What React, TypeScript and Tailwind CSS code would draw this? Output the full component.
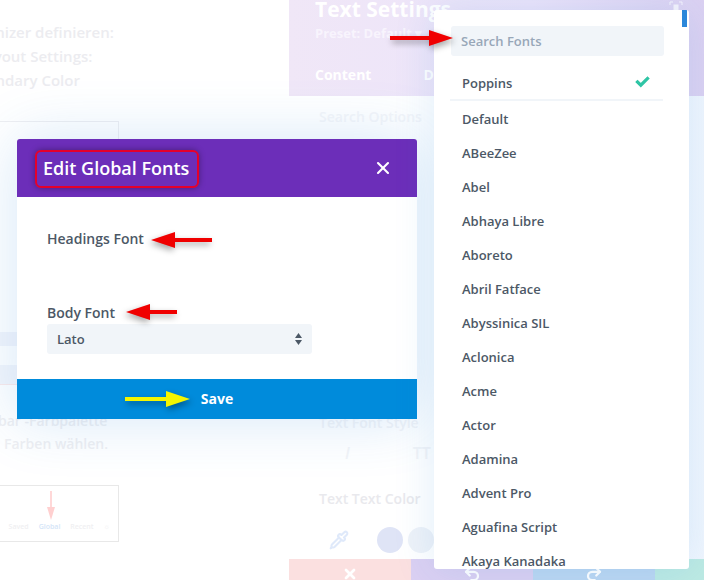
import React from 'react';
import { Pipette, Redo2, Undo2, X } from 'lucide-react';

const fonts = [
  'Default',
  'ABeeZee',
  'Abel',
  'Abhaya Libre',
  'Aboreto',
  'Abril Fatface',
  'Abyssinica SIL',
  'Aclonica',
  'Acme',
  'Actor',
  'Adamina',
  'Advent Pro',
  'Aguafina Script',
  'Akaya Kanadaka',
];

function Arrow({ className, color, length, flip }: { className: string; color: string; length: number; flip?: boolean }) {
  return (
    <svg
      className={`absolute overflow-visible ${className}`}
      width={length}
      height={18}
      viewBox={`0 0 ${length} 18`}
      style={{ filter: 'drop-shadow(2px 3px 3px rgba(0,0,0,0.35))', transform: flip ? 'scaleX(-1)' : undefined }}
    >
      <rect x="0" y="7" width={length - 22} height="4" fill={color} />
      <polygon points={`${length - 24},1 ${length},9 ${length - 24},17`} fill={color} />
    </svg>
  );
}

export default function App() {
  return (
    <div className="relative w-[704px] h-[580px] overflow-hidden bg-white font-['Open_Sans',sans-serif] flex">
      {/* faded page behind the modal */}
      <div className="w-[289px] shrink-0 flex flex-col text-[#ececf0] font-semibold text-[15px]">
        <div className="pt-[20px] leading-[24px] whitespace-nowrap">
          <p className="ml-[-51px]">Customizer definieren:</p>
          <p className="ml-[-46px]">Im Layout Settings:</p>
          <p className="ml-[-38px]">Secondary Color</p>
        </div>
        <div className="mt-[29px] w-[119px] h-[80px] border-t border-r border-[#efeff2]" />
        <div className="mt-[131px] w-[17px] h-[14px] bg-[#f3f5fb]" />
        <div className="mt-[19px] w-[17px] h-[20px] bg-[#f4f6fb] border-b border-[#fbe9e9]" />
        <div className="mt-[24px] -ml-[2px] text-[14px] leading-[23px] whitespace-nowrap text-[#efeff2]">
          <p>bar -Farbpalette</p>
          <p className="ml-[6px]">Farben wählen.</p>
        </div>
        <div className="mt-[30px] w-[119px] h-[57px] border border-[#e8e8e8] border-l-0 relative flex items-end justify-end gap-[10px] pr-[8px] pb-[9px] text-[7px] leading-[10px] text-[#f0f0f2]">
          <span>Saved</span>
          <span className="text-[#d4e5f8]">Global</span>
          <span>Recent</span>
          <span>☼</span>
          <svg className="absolute left-[46px] top-[5px]" width="10" height="30" viewBox="0 0 10 30">
            <rect x="4" y="0" width="2" height="18" fill="#ffd8d8" />
            <polygon points="1,16 9,16 5,29" fill="#ffd0d0" />
          </svg>
        </div>
      </div>

      {/* faded settings panel */}
      <div className="w-[488px] shrink-0 flex flex-col bg-white">
        <div className="h-[96px] shrink-0 bg-gradient-to-r from-[#f0e7f7] via-[#ece4fa] to-[#d5c9ee] text-white font-bold">
          <p className="pl-[26px] text-[21px] leading-[22px] -mt-[2px]">Text Settings</p>
          <p className="pl-[26px] mt-[5px] text-[13px] leading-[16px] text-[#f8f4fd]">Preset: Default ▾</p>
          <div className="flex pl-[26px] gap-[52px] mt-[24px] text-[14px] leading-[20px]">
            <span>Content</span>
            <span>Design</span>
          </div>
        </div>
        <div className="flex-1 bg-gradient-to-r from-white via-white to-[#eaf2fd] text-[#f3f4f7] font-semibold text-[14px]">
          <p className="pl-[30px] pt-[11px] leading-[20px] text-[#f5f6f9]">Search Options</p>
          <p className="pl-[30px] mt-[286px] leading-[20px]">Text Font Style</p>
          <div className="pl-[56px] mt-[8px] flex gap-[63px] text-[16px] leading-[24px] text-[#f3f4f7]">
            <span className="italic">I</span>
            <span>TT</span>
          </div>
          <p className="pl-[30px] mt-[24px] leading-[20px] text-[#e9e9ed]">Text Text Color</p>
          <div className="pl-[40px] mt-[18px] flex items-center">
            <Pipette className="w-[20px] h-[20px] text-[#dfe9fa] mr-[28px]" strokeWidth={2.5} />
            <span className="w-[26px] h-[26px] rounded-full bg-[#dfe4f6]" />
            <span className="w-[26px] h-[26px] ml-[5px] rounded-full bg-[#eef2f8]" />
          </div>
        </div>
        <div className="h-[21px] shrink-0 flex text-white">
          <div className="w-[122px] bg-[#fbe0e0] flex justify-center pt-[7px]">
            <X className="w-[16px] h-[16px]" strokeWidth={4} />
          </div>
          <div className="w-[122px] bg-[#dbd0f2] flex justify-center pt-[6px]">
            <Undo2 className="w-[18px] h-[18px]" strokeWidth={3} />
          </div>
          <div className="w-[122px] bg-[#bcd7f2] flex justify-center pt-[6px]">
            <Redo2 className="w-[18px] h-[18px]" strokeWidth={3} />
          </div>
          <div className="w-[122px] bg-[#bdeae3]" />
        </div>
      </div>

      {/* modal */}
      <div className="absolute left-[17px] top-[139px] w-[400px] h-[280px] flex flex-col rounded-t-[3px] bg-white shadow-[0_0_60px_rgba(43,135,218,0.2)]">
        <div className="h-[58px] shrink-0 bg-[#6c2eb9] rounded-t-[3px] flex items-center justify-between pl-[26px] pr-[24px]">
          <h1 className="text-[18px] font-semibold text-white leading-[24px]">Edit Global Fonts</h1>
          <X className="text-white w-[20px] h-[20px]" strokeWidth={2.5} />
        </div>
        <div className="flex-1 px-[30px] text-[#4c5866] text-[14px] font-semibold">
          <p className="pt-[32px] leading-[20px]">Headings Font</p>
          <p className="mt-[54px] leading-[20px]">Body Font</p>
          <div className="mt-[1px] w-[265px] h-[30px] rounded-[3px] bg-[#f1f5f9] flex items-center justify-between pl-[10px] pr-[10px] text-[13px]">
            <span className="pt-[1px]">Lato</span>
            <svg width="7" height="12" viewBox="0 0 7 12" fill="#4c5866">
              <polygon points="3.5,0 7,5 0,5" />
              <polygon points="0,7 7,7 3.5,12" />
            </svg>
          </div>
        </div>
        <div className="h-[40px] shrink-0 bg-[#008bdb] flex items-center justify-center text-white font-bold text-[14px] pb-[2px]">
          Save
        </div>
        <div className="absolute left-[18px] top-[11px] w-[164px] h-[38px] rounded-[6px] border-2 border-[#e5002b] shadow-[0_0_6px_rgba(0,0,0,0.35)]" />
      </div>

      {/* focus icon peeking above the dropdown */}
      <svg className="absolute left-[669px] top-[1px]" width="14" height="10" viewBox="0 0 14 10" fill="none" stroke="#f7f4fc" strokeWidth="1">
        <path d="M1 4V1h3M10 1h3v3" />
        <rect x="5" y="4" width="4" height="6" fill="#f7f4fc" />
      </svg>

      {/* font dropdown */}
      <div className="absolute left-[434px] top-[10px] w-[255px] h-[559px] overflow-hidden rounded-[3px] bg-white shadow-[0_0_40px_rgba(43,135,218,0.15)] text-[13px] font-semibold text-[#4c5866]">
        <div className="mx-[17px] mt-[16px] h-[30px] w-[213px] rounded-[3px] bg-[#f1f5f9] flex items-center pl-[10px] pt-[1px] text-[#98a7b8]">
          Search Fonts
        </div>
        <div className="mx-[16px] mt-[10px] h-[35px] w-[213px] border-b-2 border-[#f1f5f9] flex items-center justify-between pl-[12px] pr-[13px] pt-[2px]">
          <span>Poppins</span>
          <svg className="-mt-[3px]" width="15" height="12" viewBox="0 0 15 12" fill="none" stroke="#2fc5a5" strokeWidth="3.2" strokeLinecap="square">
            <path d="M2.5 6 L5.8 9.2 L12.5 2.5" />
          </svg>
        </div>
        <ul className="pl-[28px] pt-[1px]">
          {fonts.map((name) => (
            <li key={name} className="h-[34px] leading-[34px]">
              {name}
            </li>
          ))}
        </ul>
        <div className="absolute right-[2px] top-0 w-[5px] h-[17px] bg-[#2b87da]" />
      </div>

      <Arrow className="left-[390px] top-[29px]" color="#f00000" length={63} />
      <Arrow className="left-[151px] top-[231px]" color="#f00000" length={61} flip />
      <Arrow className="left-[126px] top-[303px]" color="#f00000" length={51} flip />
      <Arrow className="left-[125px] top-[390px]" color="#f5f500" length={65} />
    </div>
  );
}
